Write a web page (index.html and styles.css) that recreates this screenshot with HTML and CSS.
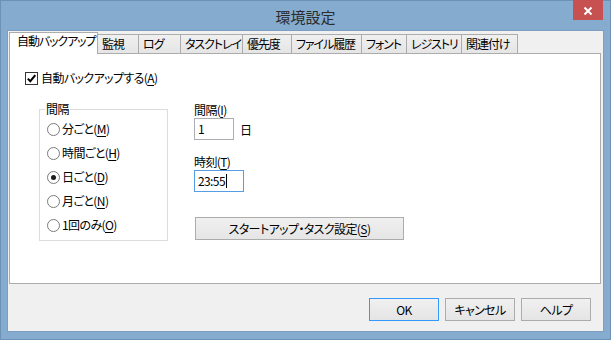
FILE: index.html
```html
<!DOCTYPE html>
<html lang="ja">
<head>
<meta charset="utf-8">
<title>環境設定</title>
<link rel="stylesheet" href="styles.css">
</head>
<body>
<div class="window">
  <div class="titlebar">
    <div class="title">環境設定</div>
    <button class="close" aria-label="閉じる">
      <svg width="30" height="20" viewBox="0 0 30 20"><path d="M11.5 7.5 L18.5 14.5 M18.5 7.5 L11.5 14.5" stroke="#fff" stroke-width="2" fill="none"/></svg>
    </button>
  </div>
  <div class="client">
    <div class="tabs">
      <div class="tab active">自動バックアップ</div>
      <div class="tab">監視</div>
      <div class="tab">ログ</div>
      <div class="tab">タスクトレイ</div>
      <div class="tab">優先度</div>
      <div class="tab">ファイル履歴</div>
      <div class="tab">フォント</div>
      <div class="tab">レジストリ</div>
      <div class="tab">関連付け</div>
    </div>
    <div class="panel">
      <div class="check-row">
        <span class="checkbox"><svg width="11" height="11" viewBox="0 0 11 11"><path d="M1.8 5.6 L4.3 8.2 L9.3 2.2" stroke="#000" stroke-width="2" fill="none"/></svg></span>
        <span>自動バックアップする(<u>A</u>)</span>
      </div>
      <div class="body">
        <div class="group">
          <div class="legend">間隔</div>
          <div class="radio-row first"><span class="radio"></span><span>分ごと(<u>M</u>)</span></div>
          <div class="radio-row"><span class="radio"></span><span>時間ごと(<u>H</u>)</span></div>
          <div class="radio-row"><span class="radio on"></span><span>日ごと(<u>D</u>)</span></div>
          <div class="radio-row"><span class="radio"></span><span>月ごと(<u>N</u>)</span></div>
          <div class="radio-row"><span class="radio"></span><span>1回のみ(<u>O</u>)</span></div>
        </div>
        <div class="right-col">
          <div class="field-label">間隔(<u>I</u>)</div>
          <div class="input-row">
            <div class="input narrow">1</div>
            <span>日</span>
          </div>
          <div class="field-label second">時刻(<u>T</u>)</div>
          <div class="input time focus">23:55<span class="caret"></span></div>
          <button class="btn startup">スタートアップ・タスク設定(<u>S</u>)</button>
        </div>
      </div>
    </div>
    <div class="footer">
      <button class="btn action default">OK</button>
      <button class="btn action">キャンセル</button>
      <button class="btn action">ヘルプ</button>
    </div>
  </div>
</div>
</body>
</html>
```

FILE: styles.css
```css
html, body {
  margin: 0;
  padding: 0;
  background: #85abcf;
}
body {
  font-family: "Noto Sans CJK JP", "Noto Sans", sans-serif;
  font-size: 12px;
  font-feature-settings: "palt";
  letter-spacing: -0.6px;
  color: #000;
}
u {
  text-decoration-thickness: 1px;
  text-underline-offset: 2px;
}
.window {
  width: 611px;
  height: 340px;
  box-sizing: border-box;
  background: #85abcf;
  border: 1px solid #6e92b6;
  padding: 0 6px 7px 6px;
  display: flex;
  flex-direction: column;
}
.titlebar {
  flex: none;
  height: 29px;
  display: grid;
  grid-template-columns: 1fr auto 1fr;
}
.title {
  grid-column: 2;
  font-size: 15px;
  line-height: 26px;
  padding-top: 3px;
  letter-spacing: 0;
  color: #2c2c2c;
}
.close {
  grid-column: 3;
  justify-self: end;
  align-self: start;
  width: 30px;
  height: 20px;
  margin: -1px 1px 0 0;
  padding: 0;
  border: 0;
  background: #c75050;
  display: block;
}
.close svg { display: block; }
.client {
  flex: 1;
  background: #f0f0f0;
  border: 1px solid #7b9ec2;
  display: flex;
  flex-direction: column;
}
.tabs {
  display: flex;
  align-items: flex-end;
  height: 22px;
  padding-left: 1px;
  flex: none;
}
.tab {
  box-sizing: border-box;
  height: 19px;
  border: 1px solid #acacac;
  border-bottom: 0;
  margin-right: -1px;
  background: linear-gradient(#f0f0f0, #e5e5e5);
  padding-left: 4px;
  line-height: 17px;
  letter-spacing: -1.1px;
  white-space: nowrap;
  overflow: hidden;
}
.tab.active {
  height: 22px;
  margin-bottom: -1px;
  background: #fff;
  position: relative;
  z-index: 1;
  padding-left: 7px;
  line-height: 16px;
}
.tab:nth-child(1) { width: 89px; }
.tab:nth-child(2) { width: 42px; }
.tab:nth-child(3) { width: 43px; }
.tab:nth-child(4) { width: 63px; }
.tab:nth-child(5) { width: 50px; }
.tab:nth-child(6) { width: 71px; }
.tab:nth-child(7) { width: 46px; }
.tab:nth-child(8) { width: 56px; }
.tab:nth-child(9) { width: 57px; }
.panel {
  flex: none;
  margin: 0 2px 0 1px;
  height: 231px;
  box-sizing: border-box;
  background: #fff;
  border: 1px solid #acacac;
  padding: 16px 0 0 15px;
}
.check-row {
  display: flex;
  align-items: center;
  height: 16px;
  line-height: 16px;
}
.checkbox {
  width: 13px;
  height: 13px;
  box-sizing: border-box;
  border: 1px solid #333;
  background: #fff;
  margin-right: 3px;
  display: grid;
  place-items: center;
}
.checkbox svg { display: block; }
.body {
  display: flex;
  align-items: flex-start;
  gap: 26px;
  margin-top: 16px;
  padding-left: 14px;
}
.group {
  width: 129px;
  box-sizing: border-box;
  border: 1px solid #dcdcdc;
  margin-top: 7px;
  padding: 0 0 3px 7px;
}
.legend {
  margin: -8px 0 0 -2px;
  padding: 0 1px;
  width: fit-content;
  background: #fff;
  line-height: 14px;
}
.radio-row {
  display: flex;
  align-items: center;
  height: 24px;
  line-height: 16px;
}
.radio-row.first { margin-top: 1px; }
.radio {
  width: 13px;
  height: 13px;
  box-sizing: border-box;
  border: 1px solid #7a7a7a;
  border-radius: 50%;
  background: #fff;
  margin-right: 2px;
  display: grid;
  place-items: center;
}
.radio.on::after {
  content: "";
  width: 5px;
  height: 5px;
  border-radius: 50%;
  background: #1b1b1b;
}
.right-col {
  display: flex;
  flex-direction: column;
  align-items: flex-start;
}
.field-label { line-height: 16px; }
.field-label.second { margin-top: 14px; }
.input-row {
  display: flex;
  align-items: center;
  gap: 6px;
}
.input {
  box-sizing: border-box;
  height: 22px;
  border: 1px solid #abadb3;
  background: #fff;
  padding-left: 3px;
  line-height: 20px;
  display: flex;
  align-items: center;
}
.input.narrow { width: 40px; }
.input.time { width: 50px; }
.input.focus { border-color: #569de5; }
.caret {
  display: inline-block;
  width: 0;
  height: 14px;
  border-left: 1px solid #000;
  margin-left: 1px;
}
.btn {
  box-sizing: border-box;
  border: 1px solid #acacac;
  background: linear-gradient(#f0f0f0, #e5e5e5);
  font: inherit;
  letter-spacing: -0.6px;
  color: #000;
  padding: 0;
  height: 23px;
  line-height: 21px;
}
.btn.startup {
  width: 209px;
  margin: 25px 0 0 1px;
}
.footer {
  display: flex;
  justify-content: flex-end;
  gap: 6px;
  padding: 14px 12px 0 0;
}
.btn.action { width: 70px; }
.btn.default { border-color: #3399ff; }
```
